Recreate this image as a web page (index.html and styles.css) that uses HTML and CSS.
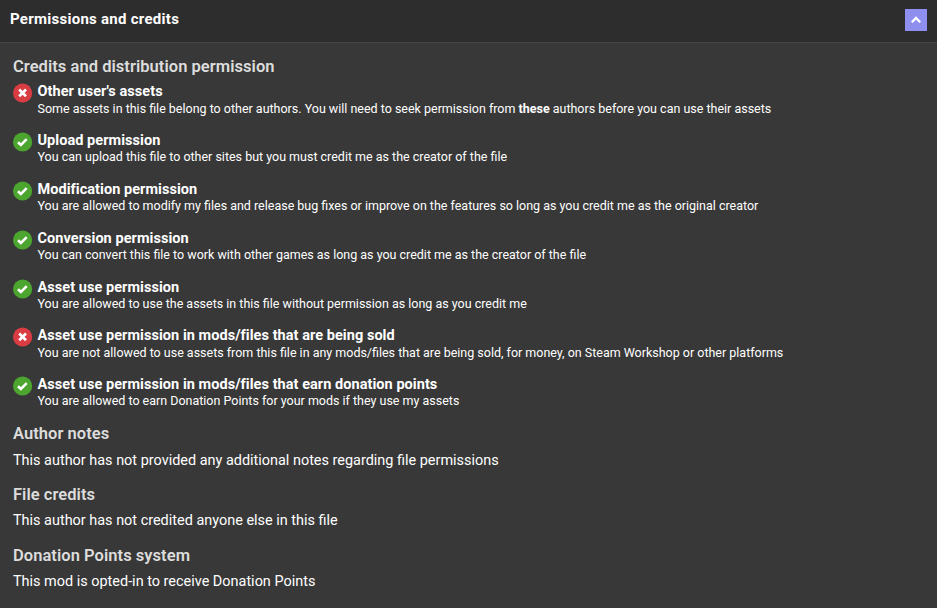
FILE: index.html
```html
<!DOCTYPE html>
<html lang="en">
<head>
<meta charset="utf-8">
<title>Permissions and credits</title>
<link rel="stylesheet" href="styles.css">
</head>
<body>
<svg class="defs" width="0" height="0">
  <symbol id="yes" viewBox="0 0 20 20"><circle cx="9.600" cy="10" r="9.6" fill="#4ba52f"/><path d="M5 10.200 7.900 13 13.700 7.200" fill="none" stroke="#fff" stroke-width="2.600"/></symbol>
  <symbol id="no" viewBox="0 0 20 20"><circle cx="9.600" cy="10" r="9.6" fill="#d93c42"/><path d="M6.200 6.500 13 13.300M13 6.500 6.200 13.300" fill="none" stroke="#fff" stroke-width="2.700"/></symbol>
</svg>
<header class="bar">
  <h1>Permissions and credits</h1>
  <button class="toggle" aria-label="Collapse"><svg viewBox="0 0 22 22"><path d="M6.800 13.200 11 9l4.200 4.200" fill="none" stroke="#fff" stroke-width="2.300"/></svg></button>
</header>
<main>
  <h2>Credits and distribution permission</h2>
  <ul class="permissions">
    <li><svg class="icon"><use href="#no"/></svg><div><h3>Other user's assets</h3><p>Some assets in this file belong to other authors. You will need to seek permission from <b>these</b> authors before you can use their assets</p></div></li>
    <li><svg class="icon"><use href="#yes"/></svg><div><h3>Upload permission</h3><p>You can upload this file to other sites but you must credit me as the creator of the file</p></div></li>
    <li><svg class="icon"><use href="#yes"/></svg><div><h3>Modification permission</h3><p>You are allowed to modify my files and release bug fixes or improve on the features so long as you credit me as the original creator</p></div></li>
    <li><svg class="icon"><use href="#yes"/></svg><div><h3>Conversion permission</h3><p>You can convert this file to work with other games as long as you credit me as the creator of the file</p></div></li>
    <li><svg class="icon"><use href="#yes"/></svg><div><h3>Asset use permission</h3><p>You are allowed to use the assets in this file without permission as long as you credit me</p></div></li>
    <li><svg class="icon"><use href="#no"/></svg><div><h3>Asset use permission in mods/files that are being sold</h3><p>You are not allowed to use assets from this file in any mods/files that are being sold, for money, on Steam Workshop or other platforms</p></div></li>
    <li><svg class="icon"><use href="#yes"/></svg><div><h3>Asset use permission in mods/files that earn donation points</h3><p>You are allowed to earn Donation Points for your mods if they use my assets</p></div></li>
  </ul>
  <section><h2>Author notes</h2><p>This author has not provided any additional notes regarding file permissions</p></section>
  <section><h2>File credits</h2><p>This author has not credited anyone else in this file</p></section>
  <section><h2>Donation Points system</h2><p>This mod is opted-in to receive Donation Points</p></section>
</main>
</body>
</html>
```
FILE: styles.css
```css
* { box-sizing: border-box; margin: 0; padding: 0; }
body { height: 608px; overflow: hidden; background: #383838; color: #fff; font-family: Roboto, sans-serif; }
.defs { display: block; }
.bar { height: 43px; padding: 0 10px; display: flex; justify-content: space-between; background: #2d2d2d; border-bottom: 1px solid #444; }
.bar h1 { font-size: 15px; line-height: 38px; font-weight: 700; letter-spacing: 0.270px; }
.toggle { width: 22px; height: 22px; margin-top: 9px; border: 0; background: #8e8fee; }
.toggle svg { display: block; width: 22px; height: 22px; }
main { padding: 12px 13px; }
h2 { font-size: 16.500px; line-height: 24px; font-weight: 600; letter-spacing: 0.045px; color: #ddd; }
.permissions { list-style: none; height: 340.100px; margin-top: 3.300px; }
.permissions li { display: flex; gap: 4.500px; height: 48.820px; }
.icon { width: 20px; height: 20px; margin-top: 1px; flex: none; }
h3 { font-size: 14.500px; line-height: 18px; font-weight: 700; letter-spacing: 0.050px; padding-top: 1px; }
.permissions p { font-size: 12.490px; line-height: 16px; white-space: nowrap; margin-top: -0.700px; }
section { height: 60.700px; }
section p { font-size: 14.440px; line-height: 22px; margin-top: 3.150px; }
```
